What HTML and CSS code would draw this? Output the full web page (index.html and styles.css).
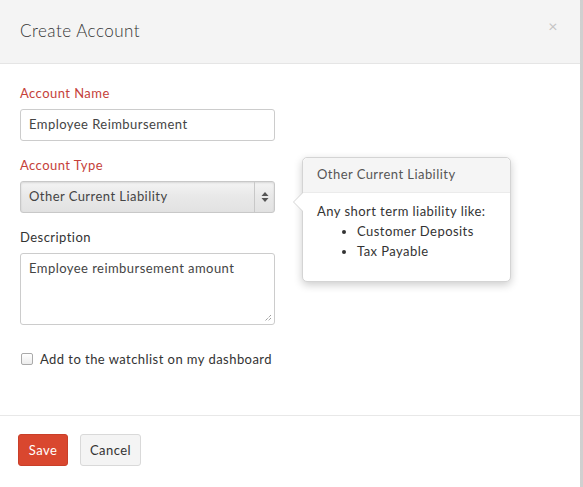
FILE: index.html
```html
<!DOCTYPE html>
<html>
<head>
<meta charset="utf-8">
<link rel="stylesheet" href="styles.css">
</head>
<body>
<div class="modal">
  <div class="modal-header">
    <h1 class="title">Create Account</h1>
    <span class="close">×</span>
  </div>
  <div class="modal-body">
    <div class="field">
      <label class="label required">Account Name</label>
      <div class="input">Employee Reimbursement</div>
    </div>
    <div class="field type-field">
      <label class="label required">Account Type</label>
      <div class="select">
        <span class="select-text">Other Current Liability</span>
        <span class="select-arrows">
          <svg width="8" height="12" viewBox="0 0 8 12"><path d="M4 1 L7.5 5 H0.5 Z" fill="#555"/><path d="M4 11 L7.5 7 H0.5 Z" fill="#555"/></svg>
        </span>
      </div>
      <div class="popover">
        <div class="popover-arrow"></div>
        <div class="popover-title">Other Current Liability</div>
        <div class="popover-content">
          <div>Any short term liability like:</div>
          <ul class="list">
            <li>Customer Deposits</li>
            <li>Tax Payable</li>
          </ul>
        </div>
      </div>
    </div>
    <div class="field">
      <label class="label">Description</label>
      <div class="textarea">Employee reimbursement amount
        <svg class="grip" width="8" height="8" viewBox="0 0 8 8"><path d="M7 1 L1 7 M7 4 L4 7 M7 7 L7 7" stroke="#777" stroke-width="1" stroke-dasharray="1 1"/></svg>
      </div>
    </div>
    <div class="check-row">
      <span class="checkbox"></span>
      <span class="check-label">Add to the watchlist on my dashboard</span>
    </div>
  </div>
  <div class="modal-footer">
    <button class="btn btn-primary">Save</button>
    <button class="btn btn-default">Cancel</button>
  </div>
</div>
</body>
</html>
```

FILE: styles.css
```css
* { box-sizing: border-box; }
html, body { margin: 0; padding: 0; }
body {
  width: 583px;
  height: 487px;
  background: linear-gradient(to right, #bdbdbd, #d0d0d0);
  font-family: Lato, "Open Sans", sans-serif;
  letter-spacing: 0.45px;
  color: #333;
  overflow: hidden;
}
.modal {
  width: 580px;
  height: 487px;
  background: #fff;
  display: flex;
  flex-direction: column;
}
.modal-header {
  height: 64px;
  background: #f4f4f4;
  border-bottom: 1px solid #e5e5e5;
  display: flex;
  align-items: center;
  justify-content: space-between;
  padding: 0 20px 2px 20px;
}
.title {
  margin: 0;
  font-size: 17px;
  font-weight: 300;
  color: #333;
  letter-spacing: 0.5px;
}
.close {
  font-size: 16px;
  color: #c4c4c4;
  margin-top: -10px;
  margin-right: 2px;
}
.modal-body {
  padding: 21px 20px 0 20px;
  height: 352px;
  border-bottom: 1px solid #e8e8e8;
}
.field { margin-bottom: 16px; position: relative; }
.label {
  display: block;
  font-size: 13px;
  line-height: 16px;
  margin-bottom: 8px;
  color: #333;
}
.label.required { color: #c5413a; }
.input, .select, .textarea {
  width: 255px;
  border: 1px solid #ccc;
  border-radius: 3px;
  font-size: 13px;
  color: #444;
}
.input {
  height: 32px;
  line-height: 29px;
  padding: 0 8px;
}
.select {
  height: 32px;
  display: flex;
  align-items: stretch;
  background: linear-gradient(to bottom, #f4f4f4 0%, #e9e9e9 45%, #e2e2e2 100%);
  box-shadow: inset 0 1px 2px rgba(0,0,0,0.12);
  border-color: #c8c8c8;
}
.select-text { flex: 1; line-height: 29px; padding-left: 8px; }
.select-arrows {
  width: 20px;
  border-left: 1px solid #c8c8c8;
  display: flex;
  align-items: center;
  justify-content: center;
}
.textarea {
  height: 72px;
  padding: 6px 8px;
  line-height: 16px;
  position: relative;
}
.grip { position: absolute; right: 2px; bottom: 2px; }
.check-row {
  display: flex;
  align-items: center;
  margin-top: 26px;
  font-size: 13px;
}
.checkbox {
  width: 12px;
  height: 12px;
  border: 1px solid #aaa;
  border-radius: 2px;
  background: linear-gradient(#fff, #ececec);
  margin-left: 1px;
  margin-right: 7px;
}
.check-label { color: #333; }
.modal-footer {
  padding: 18px 18px;
  display: flex;
  gap: 12px;
}
.btn {
  height: 32px;
  font-family: inherit;
  font-size: 13px;
  letter-spacing: 0.45px;
  border-radius: 3px;
  padding: 0;
  cursor: pointer;
}
.btn-primary {
  background: #d9472f;
  border: 1px solid #c93f29;
  color: #fff;
  width: 50px;
}
.btn-default {
  background: #f4f4f4;
  border: 1px solid #d9d9d9;
  color: #333;
  width: 61px;
}
.popover {
  position: absolute;
  left: 282px;
  top: 0px;
  width: 209px;
  height: 125px;
  background: #fff;
  border: 1px solid #d4d4d4;
  border-radius: 5px;
  box-shadow: 0 3px 8px rgba(0,0,0,0.2);
  font-size: 13px;
}
.popover-arrow {
  position: absolute;
  left: -10px;
  top: 34px;
  width: 0; height: 0;
  border-top: 10px solid transparent;
  border-bottom: 10px solid transparent;
  border-right: 10px solid #d4d4d4;
}
.popover-arrow::after {
  content: "";
  position: absolute;
  left: 1px;
  top: -9px;
  border-top: 9px solid transparent;
  border-bottom: 9px solid transparent;
  border-right: 9px solid #fff;
}
.popover-title {
  height: 35px;
  line-height: 33px;
  padding: 0 14px;
  background: #f5f5f5;
  border-bottom: 1px solid #ebebeb;
  border-radius: 5px 5px 0 0;
  color: #555;
}
.popover-content {
  padding: 8px 14px;
  color: #333;
  line-height: 20px;
}
.list {
  margin: 0;
  padding-left: 40px;
}
```
